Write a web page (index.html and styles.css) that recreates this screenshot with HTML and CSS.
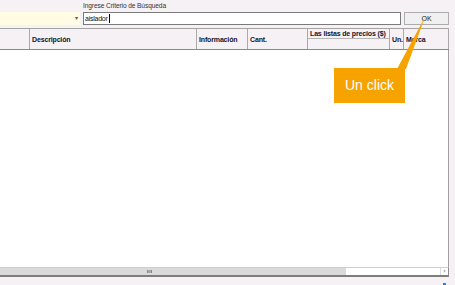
FILE: index.html
```html
<!DOCTYPE html>
<html lang="es">
<head>
<meta charset="utf-8">
<title>Búsqueda</title>
<link rel="stylesheet" href="styles.css">
</head>
<body>
<div class="page">
  <div class="top">
    <div class="combo-wrap">
      <div class="combo"><span class="arrow">▾</span></div>
    </div>
    <div class="search">
      <div class="label">Ingrese Criterio de Búsqueda</div>
      <div class="row">
        <div class="input">aislador<span class="caret"></span></div>
        <div class="ok">OK</div>
      </div>
    </div>
  </div>
  <div class="grid">
    <div class="head">
      <div class="cell"></div>
      <div class="cell">Descripción</div>
      <div class="cell">Información</div>
      <div class="cell">Cant.</div>
      <div class="cell split"><div class="split-top">Las listas de precios ($)</div><div class="split-bottom"></div></div>
      <div class="cell">Un.</div>
      <div class="cell">Marca</div>
    </div>
    <div class="body"></div>
    <div class="hscroll">
      <div class="thumb"><span class="grip"></span></div>
      <div class="track"></div>
      <div class="btn">›</div>
    </div>
  </div>
  <div class="foot"><span class="dot"></span></div>

  <svg class="pointer" width="455" height="285" viewBox="0 0 455 285">
    <polygon points="397,69 406,69 425,17" fill="#f6a300"/>
  </svg>
  <div class="callout">Un click</div>
</div>
</body>
</html>
```
FILE: styles.css
```css
html, body {
  margin: 0;
  padding: 0;
  background: #f5f1f5;
}
body {
  width: 455px;
  height: 285px;
  overflow: hidden;
  font-family: "Liberation Sans", Arial, sans-serif;
  color: #111;
}
.page {
  position: relative;
  width: 455px;
  height: 285px;
}
.top {
  display: flex;
  height: 28px;
}
.combo-wrap {
  width: 83px;
  padding-top: 12px;
}
.combo {
  width: 80px;
  height: 13px;
  background: #fffbe4;
  position: relative;
}
.arrow {
  position: absolute;
  right: 2px;
  top: 2px;
  font-size: 6px;
  color: #555;
  font-family: "DejaVu Sans", sans-serif;
}
.search {
  display: flex;
  flex-direction: column;
  padding-top: 2px;
}
.label {
  height: 10px;
  font-size: 6.6px;
  letter-spacing: -0.1px;
  line-height: 8px;
  color: #333;
}
.row {
  display: flex;
  gap: 3px;
  height: 13px;
}
.input {
  box-sizing: border-box;
  width: 318px;
  height: 13px;
  background: #fff;
  border: 1px solid #7a7a7a;
  font-size: 7px;
  letter-spacing: -0.25px;
  line-height: 11px;
  padding-left: 1px;
  display: flex;
  align-items: center;
}
.caret {
  display: inline-block;
  width: 1px;
  height: 9px;
  margin-left: 1px;
  background: #000;
}
.ok {
  box-sizing: border-box;
  width: 45px;
  height: 13px;
  background: #f0f0f0;
  border: 1px solid #adadad;
  font-size: 7px;
  line-height: 11px;
  text-align: center;
  color: #222;
}
.grid {
  width: 449px;
}
.head {
  box-sizing: border-box;
  height: 22px;
  display: grid;
  grid-template-columns: 30px 167px 51px 60px 82px 14px 45px;
  border-top: 1px solid #a3a3a3;
  border-bottom: 1px solid #8a8a8a;
}
.cell {
  box-sizing: border-box;
  border-right: 1px solid #a9a9a9;
  font-weight: bold;
  font-size: 7px;
  letter-spacing: -0.15px;
  padding-left: 2px;
  display: flex;
  align-items: center;
  color: #14142a;
  white-space: nowrap;
  overflow: hidden;
}
.cell.split {
  flex-direction: column;
  align-items: stretch;
  padding-left: 0;
}
.split-top {
  height: 9px;
  border-bottom: 1px solid #b5b5b5;
  padding-left: 2px;
  line-height: 9px;
}
.split-bottom {
  flex: 1;
}
.body {
  box-sizing: border-box;
  height: 217px;
  background: #fff;
  border-right: 1px solid #a0a0a0;
}
.hscroll {
  box-sizing: border-box;
  height: 10px;
  display: flex;
  border-top: 1px solid #cfcfcf;
  border-bottom: 2px solid #7d7d7d;
  border-right: 1px solid #8a8a8a;
}
.thumb {
  width: 346px;
  background: #dadada;
  position: relative;
}
.grip {
  position: absolute;
  left: 147px;
  top: 2px;
  width: 3px;
  height: 3px;
  border-left: 1px solid #8a8a8a;
  border-right: 1px solid #8a8a8a;
  background: #a8a8a8;
}
.track {
  flex: 1;
  background: #fff;
}
.btn {
  box-sizing: border-box;
  width: 8px;
  background: #fff;
  border-left: 1px solid #dcdcdc;
  font-size: 7px;
  line-height: 7px;
  text-align: center;
  color: #666;
  font-family: "DejaVu Sans", sans-serif;
}
.foot {
  height: 9px;
  position: relative;
}
.dot {
  position: absolute;
  left: 443px;
  top: 6px;
  width: 3px;
  height: 3px;
  background: #2f7fe0;
}
.pointer {
  position: absolute;
  left: 0;
  top: 0;
  pointer-events: none;
}
.callout {
  position: absolute;
  left: 334px;
  top: 68px;
  width: 71px;
  height: 35px;
  background: #f6a300;
  color: #fff;
  font-family: "Liberation Sans", Arial, sans-serif;
  font-size: 14px;
  line-height: 35px;
  text-align: center;
}
```
